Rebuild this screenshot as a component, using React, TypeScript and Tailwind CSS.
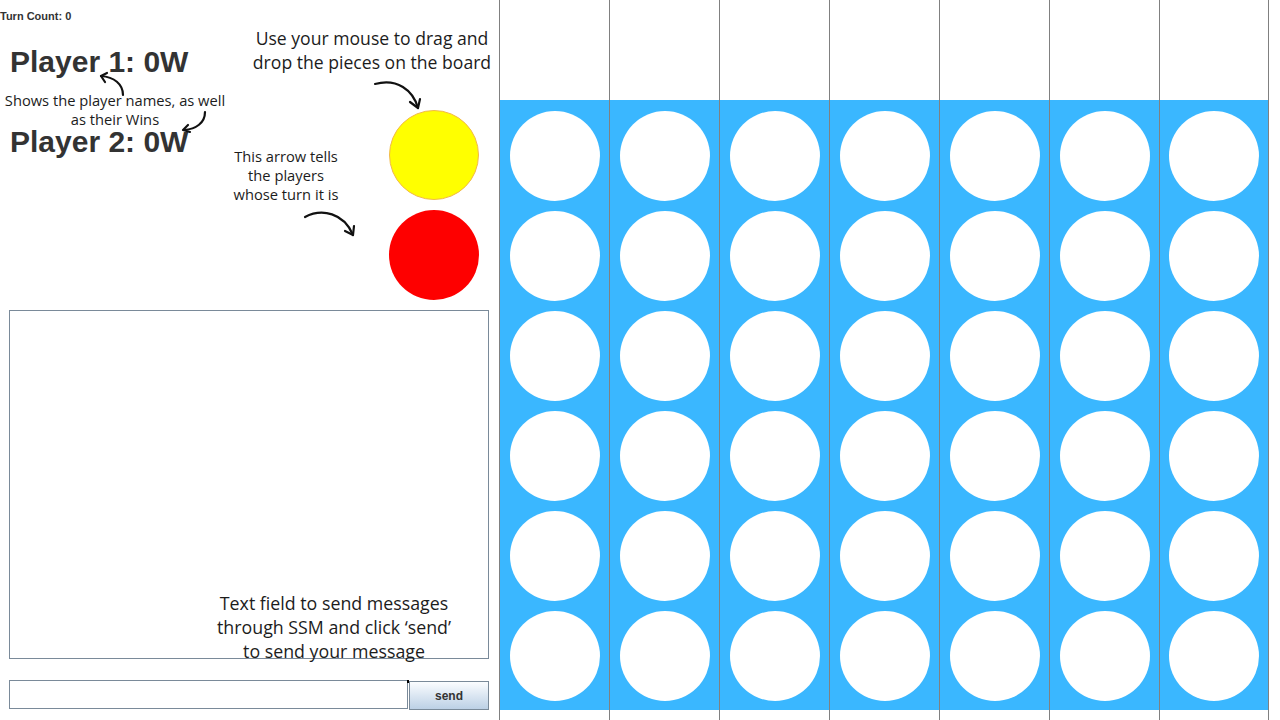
import React from 'react';

const COLS = 7;
const ROWS = 6;

const noteFont = { fontFamily: '"Open Sans", "Noto Sans", sans-serif' };

const Arrows: React.FC = () => (
  <svg
    className="pointer-events-none absolute left-0 top-0"
    width={499}
    height={310}
    viewBox="0 0 499 310"
    fill="none"
    stroke="#111"
    strokeWidth={2.2}
    strokeLinecap="round"
    strokeLinejoin="round"
  >
    {/* players -> Player 1 */}
    <path d="M123 95 C123 84 114 77 101 76" />
    <path d="M107 73 L101 76 L105 82" />
    {/* players -> Player 2 */}
    <path d="M205 112 C205 123 196 129 184 130" />
    <path d="M188 125 L183 130 L190 132" />
    {/* turn arrow */}
    <path d="M305 217 C322 208 344 213 353 235" />
    <path d="M345 231 L353 235 L354 226" />
    {/* drag arrow */}
    <path d="M375 84 C397 78 413 90 418 108" />
    <path d="M410 102 L418 108 L420 99" />
  </svg>
);

const LeftPanel: React.FC = () => (
  <div className="w-[499px] shrink-0">
    <div className="relative flex h-[310px]">
      <div className="w-[230px]">
        <p
          className="pt-[9px] text-[11px] font-bold leading-[14px] text-[#333]"
          style={{ fontFamily: '"Liberation Sans", Arial, sans-serif' }}
        >
          Turn Count: 0
        </p>
        <p
          className="mt-[22px] pl-[10px] text-[30px] font-bold leading-[34px] text-[#333]"
          style={{ fontFamily: '"Liberation Sans", Arial, sans-serif' }}
        >
          Player 1: 0W
        </p>
        <p className="mt-[12px] text-center text-[14.7px] leading-[19px] text-[#1c1c1c]" style={noteFont}>
          Shows the player names, as well
          <br />
          as their Wins
        </p>
        <p
          className="mt-[-4px] pl-[10px] text-[30px] font-bold leading-[34px] text-[#333]"
          style={{ fontFamily: '"Liberation Sans", Arial, sans-serif' }}
        >
          Player 2: 0W
        </p>
      </div>

      <div className="w-[112px] pt-[147px]">
        <p className="text-center text-[14.7px] leading-[19px] text-[#1c1c1c]" style={noteFont}>
          This arrow tells
          <br />
          the players
          <br />
          whose turn it is
        </p>
      </div>

      <div className="flex flex-col gap-[10px] pl-[47px] pt-[110px]">
        <div className="h-[90px] w-[90px] rounded-full border border-[#f2b84b] bg-[#ffff00]" />
        <div className="h-[90px] w-[90px] rounded-full bg-[#fe0000]" />
      </div>

      <p
        className="absolute left-[246px] top-[26px] w-[252px] text-center text-[17.6px] leading-[24px] text-[#1c1c1c]"
        style={noteFont}
      >
        Use your mouse to drag and
        <br />
        drop the pieces on the board
      </p>

      <Arrows />
    </div>

    <div className="relative ml-[9px] h-[349px] w-[480px] border border-[#7a8a99] bg-white">
      <p
        className="absolute left-[188px] top-[280px] w-[272px] text-center text-[17.8px] leading-[24px] text-[#1c1c1c]"
        style={noteFont}
      >
        Text field to send messages
        <br />
        through SSM and click ‘send’
        <br />
        to send your message
      </p>
    </div>

    <div className="ml-[9px] mt-[21px] flex items-start">
      <div className="relative h-[29px] w-[399px] border border-[#7a8a99] bg-white">
        <span className="absolute right-[-2px] top-[-1px] h-[3px] w-[2px] bg-black" />
      </div>
      <button
        className="ml-[1px] mt-[1px] h-[29px] w-[80px] border border-[#7a8a99] bg-gradient-to-b from-[#fbfdff] to-[#bcd0e5] text-[12px] font-bold text-[#333]"
        style={{ fontFamily: '"Liberation Sans", Arial, sans-serif' }}
      >
        send
      </button>
    </div>
  </div>
);

const Board: React.FC = () => (
  <div className="flex h-[720px]">
    {Array.from({ length: COLS }).map((_, c) => (
      <div
        key={c}
        className={`flex h-[720px] w-[110px] flex-col border-l border-[#808080] ${c === COLS - 1 ? 'border-r' : ''}`}
      >
        <div className="h-[100px] bg-white" />
        <div className="flex h-[610px] flex-col items-center gap-[10px] bg-[#3ab7ff] pt-[11px]">
          {Array.from({ length: ROWS }).map((_, r) => (
            <div key={r} className="h-[90px] w-[90px] shrink-0 rounded-full bg-white" />
          ))}
        </div>
      </div>
    ))}
  </div>
);

export default function App() {
  return (
    <div className="flex h-[720px] w-[1280px] overflow-hidden bg-white">
      <LeftPanel />
      <Board />
    </div>
  );
}
